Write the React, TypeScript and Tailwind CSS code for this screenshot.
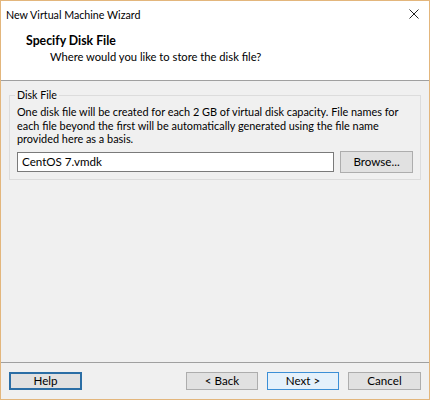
export default function App() {
  const font = { fontFamily: 'Lato, "Open Sans", sans-serif' };
  return (
    <div
      className="w-[430px] h-[400px] border border-[#e3b67c] bg-[#f0f0f0] flex flex-col text-[12px] text-black overflow-hidden"
      style={font}
    >
      {/* title bar + header */}
      <div className="bg-white border-b border-[#a0a0a0] h-[80px] flex flex-col">
        <div className="h-[28px] flex items-center justify-between pl-[5px] pr-[10px]">
          <span className="text-[10.7px] leading-none">New Virtual Machine Wizard</span>
          <svg width="10" height="10" viewBox="0 0 10 10" className="mt-[-2px]">
            <path d="M0.5 0.5L9.5 9.5M9.5 0.5L0.5 9.5" stroke="#222" strokeWidth="1" />
          </svg>
        </div>
        <div className="pl-[25px] pt-[4px] font-bold leading-[16px] text-[12.3px]">Specify Disk File</div>
        <div className="pl-[49px] leading-[16px] text-[11.2px]">Where would you like to store the disk file?</div>
      </div>

      {/* body */}
      <div className="flex-1 px-[8px] pt-[14px]">
        <div className="relative border border-[#dcdcdc] h-[85px] px-[7px] pt-[9px]">
          <span className="absolute left-[5px] top-[-9px] bg-[#f0f0f0] px-[2px] leading-[16px] text-[10.6px]">Disk File</span>
          <p className="leading-[13.5px] text-[10.9px] whitespace-nowrap">
            One disk file will be created for each 2 GB of virtual disk capacity. File names for
            <br />
            each file beyond the first will be automatically generated using the file name
            <br />
            provided here as a basis.
          </p>
          <div className="flex gap-[6px] mt-[5px] items-center">
            <div className="w-[317px] h-[20px] bg-white border border-[#7a7a7a] flex items-center pl-[4px] text-[11.6px]">
              CentOS 7.vmdk
            </div>
            <button className="w-[73px] h-[22px] bg-[#e1e1e1] border border-[#adadad] text-[11.6px]">
              Browse...
            </button>
          </div>
        </div>
      </div>

      {/* footer */}
      <div className="border-t border-[#a0a0a0] h-[37px] flex items-start pt-[9px] pl-[8px] pr-[8px] text-[11.6px]">
        <button className="w-[73px] h-[18px] bg-[#e1e1e1] border-2 border-[#2b6ea5] flex items-center justify-center leading-none">
          Help
        </button>
        <div className="flex-1" />
        <div className="flex gap-[9px]">
          <button className="w-[72px] h-[18px] bg-[#e1e1e1] border border-[#adadad] flex items-center justify-center leading-none">
            &lt; Back
          </button>
          <button className="w-[72px] h-[18px] bg-[#e5f1fb] border border-[#3c8fd6] flex items-center justify-center leading-none">
            Next &gt;
          </button>
          <button className="w-[73px] h-[18px] bg-[#e1e1e1] border border-[#adadad] flex items-center justify-center leading-none">
            Cancel
          </button>
        </div>
      </div>
    </div>
  );
}
